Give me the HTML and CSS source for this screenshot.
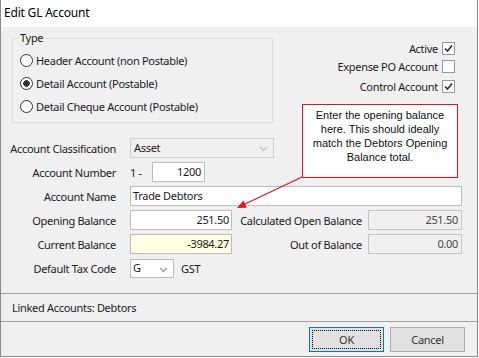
FILE: index.html
```html
<!DOCTYPE html>
<html lang="en">

<head>
  <meta charset="UTF-8">
  <meta name="viewport" content="width=device-width, initial-scale=1.0">
  <title>Edit GL Account</title>
  <link rel="stylesheet" href="styles.css">
</head>

<body>
  <div class="window">
    <div class="titlebar">Edit GL Account</div>

    <div class="content">
      <div class="top">
        <fieldset class="group">
          <legend>Type</legend>
          <div class="option"><span class="radio"></span>Header Account (non Postable)</div>
          <div class="option"><span class="radio on"></span>Detail Account (Postable)</div>
          <div class="option"><span class="radio"></span>Detail Cheque Account (Postable)</div>
        </fieldset>

        <div class="flags">
          <div class="flag">Active
            <span class="check"><svg width="11" height="11" viewBox="0 0 11 11"><path d="M2 5.5 L4.5 8 L9 2.5" fill="none" stroke="#333" stroke-width="1.6"/></svg></span>
          </div>
          <div class="flag second">Expense PO Account <span class="check"></span></div>
          <div class="flag third">Control Account
            <span class="check"><svg width="11" height="11" viewBox="0 0 11 11"><path d="M2 5.5 L4.5 8 L9 2.5" fill="none" stroke="#333" stroke-width="1.6"/></svg></span>
          </div>
        </div>
      </div>

      <div class="form">
        <div class="row">
          <span class="label">Account Classification</span>
          <div class="select wide">Asset
            <svg class="chevron" width="9" height="6" viewBox="0 0 9 6"><path d="M1 1 L4.5 4.5 L8 1" fill="none" stroke="#c4c4c4" stroke-width="1.3"/></svg>
          </div>
        </div>
        <div class="row">
          <span class="label">Account Number</span>
          <span class="prefix">1 -</span>
          <div class="input number">1200</div>
        </div>
        <div class="row">
          <span class="label">Account Name</span>
          <div class="input name">Trade Debtors</div>
        </div>
        <div class="row">
          <span class="label">Opening Balance</span>
          <div class="input amount">251.50</div>
          <span class="rlabel">Calculated Open Balance</span>
          <div class="input readonly">251.50</div>
        </div>
        <div class="row">
          <span class="label">Current Balance</span>
          <div class="input amount current">-3984.27</div>
          <span class="rlabel">Out of Balance</span>
          <div class="input readonly">0.00</div>
        </div>
        <div class="row">
          <span class="label">Default Tax Code</span>
          <div class="select tax">G
            <svg class="chevron" width="9" height="6" viewBox="0 0 9 6"><path d="M1 1 L4.5 4.5 L8 1" fill="none" stroke="#999" stroke-width="1.3"/></svg>
          </div>
          <span class="taxname">GST</span>
        </div>
      </div>
    </div>

    <div class="linked">Linked Accounts: Debtors</div>

    <div class="footer">
      <button class="btn default"><span class="focus">OK</span></button>
      <button class="btn">Cancel</button>
    </div>

    <!-- help callout over the form -->
    <div class="callout">Enter the opening balance<br>here. This should ideally<br>match the Debtors Opening<br>Balance total.</div>
    <svg class="arrow" width="80" height="45" viewBox="0 0 80 45">
      <line x1="72" y1="7" x2="14" y2="34.5" stroke="#e8141b" stroke-width="1.2"/>
      <polygon points="7,38 16.8,37.7 13.4,30.5" fill="#e8141b"/>
    </svg>
  </div>
</body>

</html>
```

FILE: styles.css
```css
body {
  margin: 0;
  background-color: #fff;
  font-family: "Noto Sans", sans-serif;
  font-size: 11px;
  letter-spacing: -0.3px;
  color: #1b1b1b;
}

.window {
  position: relative;
  width: 478px;
  height: 357px;
  box-sizing: border-box;
  border: 1px solid #8a8a8a;
  border-top: none;
  background-color: #f0f0f0;
  display: flex;
  flex-direction: column;
}

.titlebar {
  height: 27px;
  line-height: 26px;
  padding-left: 3px;
  background-color: #fff;
  font-size: 12px;
  letter-spacing: -0.2px;
  color: #000;
}

.content {
  height: 266px;
  padding-left: 11px;
}

.top {
  display: flex;
  justify-content: space-between;
}

.group {
  width: 261px;
  height: 92px;
  box-sizing: border-box;
  margin: 4px 0 0 0;
  padding: 4px 0 0 0;
  border: 1px solid #dcdcdc;
}

.group legend {
  margin-left: 5px;
  padding: 0 2px;
  line-height: 14px;
}

.option {
  display: flex;
  align-items: center;
  height: 23px;
  padding-left: 7px;
}

.radio {
  width: 13px;
  height: 13px;
  box-sizing: border-box;
  border: 1px solid #333;
  border-radius: 50%;
  background-color: #fff;
  margin-right: 3px;
}

.radio.on {
  background: radial-gradient(circle, #333 3px, #fff 3.6px);
}

.flags {
  padding-right: 22px;
  padding-top: 14px;
}

.flag {
  display: flex;
  justify-content: flex-end;
  align-items: center;
  height: 14px;
  gap: 4px;
}

.flag.second {
  margin-top: 4px;
}

.flag.third {
  margin-top: 6px;
}

.check {
  width: 13px;
  height: 13px;
  box-sizing: border-box;
  border: 1px solid #9a9a9a;
  background-color: #fff;
  display: flex;
  align-items: center;
  justify-content: center;
}

.form {
  margin-top: 15px;
}

.row {
  display: flex;
  align-items: center;
  height: 20px;
  margin-bottom: 4px;
}

.label {
  width: 110px;
  margin-left: -6px;
  margin-right: 14px;
  text-align: right;
  white-space: nowrap;
}

.select,
.input {
  position: relative;
  height: 20px;
  line-height: 18px;
  box-sizing: border-box;
  border: 1px solid #bcbcbc;
  background-color: #fff;
  padding: 0 3px;
  white-space: nowrap;
}

.select.wide {
  width: 144px;
  background-color: #f0f0f0;
  border-color: #cfcfcf;
}

.select.tax {
  width: 44px;
  height: 19px;
  line-height: 15px;
  padding-left: 2px;
}

.chevron {
  position: absolute;
  right: 5px;
  top: 7px;
}

.prefix {
  width: 22px;
}

.input.number {
  width: 53px;
  text-align: right;
}

.input.name {
  width: 332px;
  padding-left: 2px;
}

.input.amount {
  width: 102px;
  text-align: right;
  padding-right: 2px;
}

.input.current {
  background-color: #ffffe1;
}

.rlabel {
  width: 130px;
  margin-right: 6px;
  text-align: right;
}

.input.readonly {
  width: 94px;
  text-align: right;
  background-color: #f0f0f0;
  border-color: #c4c4c4;
  color: #444;
}

.taxname {
  margin-left: 7px;
}

.linked {
  height: 27px;
  line-height: 27px;
  padding-left: 11px;
  border-top: 1px solid #a0a0a0;
  border-bottom: 1px solid #a0a0a0;
}

.footer {
  flex: 1;
  display: flex;
  justify-content: flex-end;
  align-items: flex-start;
  gap: 6px;
  padding: 5px 12px 0 0;
}

.btn {
  width: 75px;
  height: 25px;
  border: 1px solid #adadad;
  background-color: #e1e1e1;
  font-family: "Noto Sans", sans-serif;
  font-size: 11px;
  letter-spacing: -0.3px;
  color: #333;
  padding: 0;
}

.btn.default {
  border-color: #0078d7;
  padding: 2px;
}

.btn .focus {
  display: block;
  height: 100%;
  box-sizing: border-box;
  border: 1px dotted #000;
  line-height: 17px;
}

.callout {
  position: absolute;
  left: 301px;
  top: 104px;
  width: 156px;
  height: 74px;
  box-sizing: border-box;
  padding-top: 3px;
  border: 1px solid #e8141b;
  background-color: #fff;
  font-family: "Liberation Sans", Arial, sans-serif;
  font-size: 11px;
  letter-spacing: 0;
  line-height: 14px;
  text-align: center;
  color: #111;
}

.arrow {
  position: absolute;
  left: 229px;
  top: 170px;
}
```
